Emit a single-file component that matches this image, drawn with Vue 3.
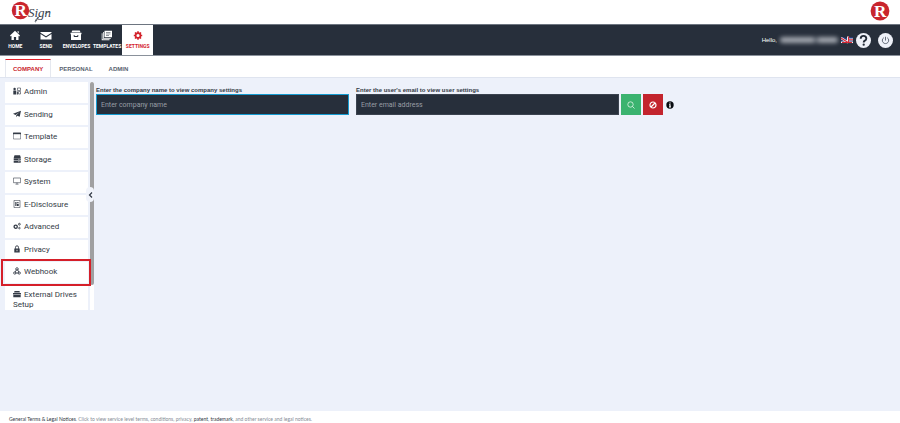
<script setup>
import { ref } from 'vue'

const nav = ['Home', 'Send', 'Envelopes', 'Templates', 'Settings']
const tabs = ['Company', 'Personal', 'Admin']
const sections = ['Admin', 'Sending', 'Template', 'Storage', 'System', 'E-Disclosure', 'Advanced', 'Privacy', 'Webhook', 'External Drives Setup']
const activeNav = ref('Settings')
const activeTab = ref('Company')
const company = ref('')
const email = ref('')
</script>

<template>
  <div class="page">
    <header class="brand">
      <svg class="logo" viewBox="0 0 42 24" role="img" aria-label="RSign">
        <circle cx="9.500" cy="10.500" r="8.700" fill="#c9252d" />
        <text x="3.500" y="16" class="logo-r">R</text>
        <text x="17" y="17" class="logo-sign">Sign</text>
        <path d="M27 17q-2 6-3 4.500q0-2 5-5.500M34 13.500q3-2 5-1.500" fill="none" stroke="#39424e" stroke-width=".8" />
      </svg>
      <svg class="mark" viewBox="0 0 20 20" role="img" aria-label="R">
        <circle cx="10" cy="10" r="9.400" fill="#c9252d" />
        <text x="4" y="15.500" class="mark-r">R</text>
      </svg>
    </header>

    <nav class="bar">
      <div class="nav-items">
        <a v-for="n in nav" :key="n" href="#" class="nav-item" :class="{ active: n === activeNav }" @click.prevent="activeNav = n">
          <svg class="nav-icon" viewBox="0 0 12 11" fill="currentColor">
            <path v-if="n === 'Home'" d="M6 .7 11 5.500 10.200 6.400 9.500 5.800V10H7.100V7H4.900v3H2.500V5.800l-.7.6L1 5.500zM8.500 1.200h1.200v2.200L8.500 2.300z" />
            <path v-else-if="n === 'Send'" d="M.5 2h11v.8L6 6.200.5 2.800zM.5 4 6 7.500 11.500 4v5.500H.5z" />
            <path v-else-if="n === 'Envelopes'" fill-rule="evenodd" d="M2.300.5h7.400l.8 1.700h-9zM.5 2.800h11v1.400H11V10H1V4.200H.5zM3.700 5v1.200q0 .8.8.8h3q.8 0 .8-.8V5h-.9v1H4.600V5z" />
            <g v-else-if="n === 'Templates'">
              <path fill-rule="evenodd" d="M3.500.7H11v6.600H3.500zM5 2.300v.5h4.500v-.5zM5 3.800v.5h4.500v-.5zM5 5.300v.5h3v-.5z" />
              <path d="M2.800 2v6h7v.8H2V2zM1.500 3.300v6h7v.9H.7V3.300z" />
            </g>
            <g v-else>
              <circle cx="6" cy="5.500" r="2.400" fill="none" stroke="currentColor" stroke-width="1.700" />
              <path d="M6 1.300v2M6 7.700v2M1.800 5.500h2M8.200 5.500h2M3 2.500l1.200 1.200M7.800 7.300 9 8.500M9 2.500 7.800 3.700M4.200 7.300 3 8.500" stroke="currentColor" stroke-width="1.600" />
            </g>
          </svg>
          <span>{{ n }}</span>
        </a>
      </div>
      <div class="account">
        <span>Hello,</span>
        <span class="user"></span>
        <svg class="flag" viewBox="0 0 12 8">
          <path fill="#263b78" d="M0 1h12v6H0z" />
          <path d="M0 2l7 4.500M7 .5v6M7 3.500h5" stroke="#fff" stroke-width="2.200" />
          <path d="M0 6.300h12" stroke="#fff" stroke-width="1.500" />
          <path d="M0 2l7 4.500M7.500.5V6M7 3.700h5M1 6.500h10" stroke="#d42735" stroke-width="1.100" />
          <path d="M1.500 0h4.500v2.500z" fill="#272f3b" />
        </svg>
        <button type="button" class="round" aria-label="Help">
          <svg viewBox="0 0 16 16"><path d="M5 6q0-3 3-3t3 2.800q0 1.500-1.500 2.300Q8.200 8.800 8.200 10" fill="none" stroke="#222a36" stroke-width="2" /><circle cx="8.200" cy="12.500" r="1.200" fill="#222a36" /></svg>
        </button>
        <button type="button" class="round power" aria-label="Sign out">
          <svg viewBox="0 0 16 16"><path d="M6.200 5a3.400 3.400 0 1 0 3.600 0M8 4v4" fill="none" stroke="#4a5361" stroke-width=".9" /></svg>
        </button>
      </div>
    </nav>

    <div class="tabs">
      <a v-for="t in tabs" :key="t" href="#" class="tab" :class="{ active: t === activeTab }" @click.prevent="activeTab = t">{{ t }}</a>
    </div>

    <main class="content">
      <aside class="side">
        <ul class="list">
          <li v-for="s in sections" :key="s" :class="{ marked: s === 'Webhook' }">
            <a href="#" @click.prevent>
              <svg class="side-icon" viewBox="0 0 8 8" fill="currentColor">
                <g v-if="s === 'Admin'"><circle cx="1.600" cy="2" r="1.200" /><path d="M.3 3.500h2.900V7.500H.3zM3.900 4.500h1V7.500h-1z" /><path d="M4.500 1h3v2.500h-3zM5.500 4.500h2V7h-2z" fill="none" stroke="currentColor" stroke-width=".6" /></g>
                <path v-else-if="s === 'Sending'" d="M8 .8 6.700 6.800 4.300 5.700 3.200 7.300V5.300L6.600 2 2.500 4.900 0 3.800z" />
                <g v-else-if="s === 'Template'"><path d="M.4 1h7.200v6H.4z" fill="none" stroke="currentColor" stroke-width=".5" /><path d="M0 .7h8v1.500H0z" /></g>
                <g v-else-if="s === 'Storage'"><path d="M1.500.3H7L7.700 2v1H.7zM.7 3.300h7v2h-7zM.7 5.700h7v2h-7z" /><path d="M5 4.300h1.700M5 6.700h1.700" stroke="#fff" stroke-width=".5" /></g>
                <path v-else-if="s === 'System'" d="M.4 1h7.200v4.700H.4zM4 5.700V7M2.500 7.200h3" fill="none" stroke="currentColor" stroke-width=".6" />
                <g v-else-if="s === 'E-Disclosure'"><path d="M1 .4h6v7.200H1z" fill="none" stroke="currentColor" stroke-width=".6" /><path d="M2.300 2h1.200v4H2.300zM4 2.300h1.700v1H4zM4 4h1.700v2H4z" /></g>
                <g v-else-if="s === 'Advanced'" fill="none" stroke="currentColor"><circle cx="2.700" cy="4.700" r="1.600" stroke-width="1.300" /><circle cx="6.400" cy="2.200" r=".9" stroke-width=".9" /><circle cx="6.400" cy="6.100" r=".8" stroke-width=".8" /></g>
                <g v-else-if="s === 'Privacy'"><path fill-rule="evenodd" d="M1.300 3.500h5.400v4.100H1.300zM3.600 4.700v1.600h.8V4.700z" /><path d="M2.500 3.800V2.300q0-1.500 1.500-1.500t1.500 1.500v1.500" fill="none" stroke="currentColor" stroke-width=".9" /></g>
                <g v-else-if="s === 'Webhook'" fill="none" stroke="currentColor" stroke-width=".8"><circle cx="4" cy="2" r="1.300" /><circle cx="1.800" cy="6" r="1.200" /><circle cx="6.200" cy="6" r="1.200" /><path d="M3.500 2.500 2 5.500M4.400 2.300 6 5.500M2 6h4" /></g>
                <path v-else d="M1.500 1h5l.4 1.500H1.100zM0 3h8v1.500H0zM.3 5h7.400v2.300H.3z" />
              </svg>
              <span>{{ s }}</span>
            </a>
          </li>
        </ul>
        <div class="track"><div class="thumb"></div></div>
        <button type="button" class="collapse" aria-label="Collapse menu">
          <svg viewBox="0 0 7 14"><path d="M5 4.500 2.500 7 5 9.500" fill="none" stroke="#303844" stroke-width="1.200" /></svg>
        </button>
      </aside>

      <form class="filters" @submit.prevent>
        <div class="field">
          <label for="company">Enter the company name to view company settings</label>
          <input id="company" v-model="company" class="current" type="text" placeholder="Enter company name" />
        </div>
        <div class="field">
          <label for="email">Enter the user's email to view user settings</label>
          <input id="email" v-model="email" type="email" placeholder="Enter email address" />
        </div>
        <div class="actions">
          <button type="submit" class="search" aria-label="Search">
            <svg viewBox="0 0 8 8"><path d="M5.500 5.500 7.500 7.500M6.200 3.500a2.700 2.700 0 1 1-5.400 0a2.700 2.700 0 0 1 5.400 0z" fill="none" stroke="#e3f6ea" stroke-width=".8" /></svg>
          </button>
          <button type="reset" class="clear" aria-label="Clear">
            <svg viewBox="0 0 8 8"><path d="M7 4a3 3 0 1 1-6 0a3 3 0 0 1 6 0zM6 2 2 6" fill="none" stroke="#fff" stroke-width="1.200" /></svg>
          </button>
          <svg class="info" viewBox="0 0 8 8"><circle cx="4" cy="4" r="3.700" fill="#080b10" /><path d="M3.400 1.400h1.200v1H3.400zM3 3.200h1.600v2.400H5v.8H3v-.8h.4V4H3z" fill="#fff" /></svg>
        </div>
      </form>
    </main>

    <footer class="foot"><a href="#">General Terms &amp; Legal Notices</a>. Click to view service level terms, conditions, privacy, <a href="#">patent</a>, <a href="#">trademark</a>, and other service and legal notices.</footer>
  </div>
</template>

<style>
body {
  background: #edf1fa;
}
</style>

<style scoped>
.page {
  display: flex;
  flex-direction: column;
  min-height: 100vh;
  font-family: "Liberation Sans", Arial, sans-serif;
  color: #343b46;
}
.page * {
  box-sizing: border-box;
}
svg {
  display: block;
  flex: none;
}
a {
  color: inherit;
  text-decoration: none;
}
button {
  display: flex;
  align-items: center;
  justify-content: center;
  padding: 0;
  border: 0;
}
.brand {
  display: flex;
  justify-content: space-between;
  height: 24px;
  padding: 0 10px 0 11px;
  background: #fff;
}
.logo {
  width: 42px;
  height: 24px;
}
.mark {
  width: 20px;
  height: 20px;
  margin-top: 1px;
}
.logo-r,
.mark-r {
  font: bold 17px "Liberation Serif", serif;
  fill: #fff;
}
.logo-sign {
  font: italic 13px "Liberation Serif", serif;
  fill: #39424e;
}
.bar {
  display: flex;
  height: 32px;
  border-top: 1px solid #6d7580;
  border-bottom: 1px solid #8a919b;
  background: #272f3b;
  color: #fff;
}
.nav-items {
  display: flex;
  width: 153px;
}
.nav-item {
  display: flex;
  flex: 1 1 0;
  min-width: 0;
  flex-direction: column;
  align-items: center;
  gap: 2px;
  padding-top: 5px;
  font-family: Roboto, sans-serif;
  font-size: 5px;
  line-height: 6px;
  font-weight: bold;
  text-transform: uppercase;
}
.nav-item.active {
  background: #fff;
  color: #d3222b;
}
.nav-icon {
  width: 12px;
  height: 11px;
}
.account {
  display: flex;
  align-items: center;
  gap: 3px;
  margin-left: auto;
  padding-right: 7px;
  font-size: 6px;
}
.user {
  width: 58px;
  height: 6px;
  border-radius: 3px;
  background: linear-gradient(90deg, #a0a5ad 56%, #525a66 62%, #a0a5ad 68%);
  filter: blur(2px);
}
.flag {
  width: 12px;
  height: 8px;
}
.round {
  width: 15px;
  height: 15px;
  border-radius: 50%;
  background: #eef1f8;
}
.round svg {
  width: 15px;
  height: 15px;
}
.power {
  margin-left: 4px;
}
.tabs {
  display: flex;
  height: 22px;
  padding: 3px 5px 0;
  border-bottom: 1px solid #dfe4ef;
  background: #fff;
}
.tab {
  padding: 0 8px;
  border-top: 1px solid transparent;
  font-size: 6px;
  line-height: 18px;
  font-weight: bold;
  text-transform: uppercase;
  color: #596270;
}
.tab.active {
  border: 1px solid #e5e8ef;
  border-top-color: #e0202a;
  border-bottom: 0;
  padding: 0 7px;
  color: #c9252d;
}
.content {
  display: flex;
  flex: 1;
  align-items: flex-start;
  gap: 2px;
  padding: 4px 0 0 5px;
}
.side {
  position: relative;
  display: flex;
  gap: 2px;
  flex: none;
  width: 89px;
}
.list {
  display: grid;
  grid-template-rows: repeat(9, 1fr) auto;
  gap: 2px;
  flex: 1;
  height: 228px;
  margin: 0;
  padding: 0;
  list-style: none;
}
.list li {
  padding: 5px 8px 0;
  background: #fff;
  font-family: Roboto, sans-serif;
  font-size: 8px;
  line-height: 10px;
}
.side-icon {
  display: inline-block;
  width: 8px;
  height: 8px;
  margin-right: 3px;
  vertical-align: -1px;
}
.marked {
  position: relative;
}
.marked::after {
  content: "";
  position: absolute;
  inset: -3px -3px -3px -4px;
  z-index: 2;
  border: 2px solid #d51f29;
}
.track {
  width: 4px;
  background: #fff;
}
.thumb {
  height: 89%;
  border-radius: 2px;
  background: #a0a0a1;
}
.collapse {
  position: absolute;
  top: 105px;
  right: 0;
  width: 8px;
  height: 15px;
  border-radius: 4px;
  background: #f1f4fb;
}
.collapse svg {
  width: 7px;
  height: 14px;
}
.filters {
  display: grid;
  grid-template-columns: 253fr 263fr 53fr 214fr;
  column-gap: 7px;
  flex: 1;
  align-items: end;
  padding-top: 4px;
}
.actions {
  display: flex;
  align-items: center;
  gap: 2px;
  margin-left: -5px;
}
.field {
  display: flex;
  flex-direction: column;
  min-width: 0;
}
.field label {
  font-size: 6px;
  line-height: 8px;
  font-weight: bold;
  white-space: nowrap;
}
.field input {
  width: 100%;
  height: 21px;
  padding: 0 4px;
  border: 1px solid #3b434f;
  border-radius: 0;
  outline: 0;
  background: #272f3b;
  color: #fff;
  font-family: Roboto, sans-serif;
  font-size: 7px;
}
.field input.current {
  border-color: #159bd0;
}
.field input::placeholder {
  color: #989da5;
}
.actions button {
  width: 20px;
  height: 21px;
}
.actions svg {
  width: 8px;
  height: 8px;
}
.search {
  background: #3bb36f;
}
.clear {
  background: #c3242d;
}
.info {
  margin-left: 1px;
}
.foot {
  height: 12px;
  padding: 4px 9px 0;
  background: #fff;
  color: #858b95;
  font-family: Lato, sans-serif;
  font-size: 5px;
  line-height: 8px;
  white-space: nowrap;
}
.foot a {
  color: #303743;
}
</style>
